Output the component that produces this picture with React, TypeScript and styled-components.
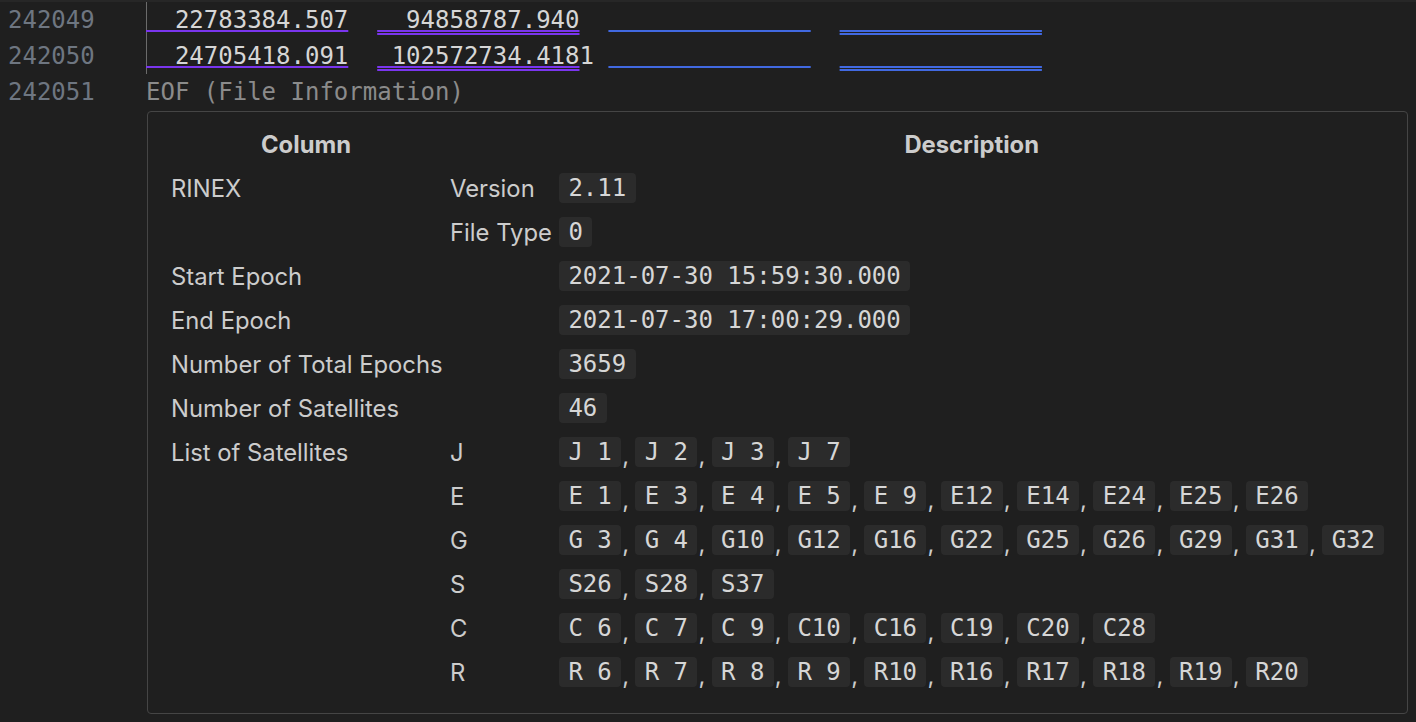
import React from "react";
import styled, { createGlobalStyle } from "styled-components";

const GlobalStyle = createGlobalStyle`
    html, body {
        margin: 0;
        padding: 0;
        background: #1f1f1f;
        overflow: hidden;
    }
`;

const MONO = `"DejaVu Sans Mono", "Liberation Mono", monospace`;
const SANS = `Inter, "Noto Sans", "Liberation Sans", sans-serif`;

const Editor = styled.main`
    width: 1416px;
    height: 722px;
    background: #1f1f1f;
    display: flex;
    flex-direction: column;
    font-family: ${MONO};
    font-size: 24px;
`;

const ScrollShadow = styled.div`
    height: 2px;
    background: #272727;
`;

const Line = styled.div`
    display: flex;
    height: 36px;
    line-height: 36px;
`;

const LineNo = styled.span`
    width: 146px;
    box-sizing: border-box;
    padding-left: 8px;
    color: #6e7681;
    flex-shrink: 0;
`;

const Code = styled.span<{ $guide?: boolean; $dim?: boolean }>`
    white-space: pre;
    color: ${(p) => (p.$dim ? "#8b8b8b" : "#d6d6d6")};
    box-shadow: ${(p) => (p.$guide ? "inset 1px 0 0 #6b6b6b" : "none")};
    flex: 1;
`;

const Field = styled.span<{ $blue?: boolean; $double?: boolean }>`
    text-decoration-line: underline;
    text-decoration-color: ${(p) => (p.$blue ? "#4169e1" : "#7a35ee")};
    text-decoration-style: ${(p) => (p.$double ? "double" : "solid")};
    text-decoration-thickness: 2px;
    text-underline-offset: 2px;
    text-decoration-skip-ink: none;
`;

const HoverRow = styled.div`
    display: flex;
    padding-left: 147px;
    margin-top: 1px;
`;

const HoverBox = styled.section`
    width: 1261px;
    height: 603px;
    box-sizing: border-box;
    border: 1px solid #454545;
    border-radius: 4px;
    background: #1f1f1f;
    padding: 10px 23px 18px;
    display: grid;
    grid-template-columns: 270px 100px 1fr;
    grid-auto-rows: 44px;
    column-gap: 9px;
    font-family: ${SANS};
    font-size: 23.8px;
    color: #cccccc;
`;

const HeadCell = styled.div`
    display: flex;
    align-items: center;
    justify-content: center;
    font-weight: 700;
`;

const Cell = styled.div`
    display: flex;
    align-items: center;
    white-space: nowrap;
`;

const Chip = styled.code`
    display: inline-block;
    height: 30px;
    line-height: 30px;
    padding: 0 9.4px;
    border-radius: 4px;
    background: #2b2b2b;
    color: #d6d6d6;
    font-family: ${MONO};
    font-size: 24px;
    white-space: pre;
`;

const Comma = styled.span`
    display: inline-block;
    width: 14.2px;
    box-sizing: border-box;
    padding-left: 1px;
    align-self: flex-end;
    line-height: 36px;
`;

const BLANK = " ".repeat(14);

type Row = { label?: string; sub?: string; values: string[] };

const rows: Row[] = [
    { label: "RINEX", sub: "Version", values: ["2.11"] },
    { sub: "File Type", values: ["0"] },
    { label: "Start Epoch", values: ["2021-07-30 15:59:30.000"] },
    { label: "End Epoch", values: ["2021-07-30 17:00:29.000"] },
    { label: "Number of Total Epochs", values: ["3659"] },
    { label: "Number of Satellites", values: ["46"] },
    { label: "List of Satellites", sub: "J", values: ["J 1", "J 2", "J 3", "J 7"] },
    {
        sub: "E",
        values: ["E 1", "E 3", "E 4", "E 5", "E 9", "E12", "E14", "E24", "E25", "E26"],
    },
    {
        sub: "G",
        values: ["G 3", "G 4", "G10", "G12", "G16", "G22", "G25", "G26", "G29", "G31", "G32"],
    },
    { sub: "S", values: ["S26", "S28", "S37"] },
    { sub: "C", values: ["C 6", "C 7", "C 9", "C10", "C16", "C19", "C20", "C28"] },
    {
        sub: "R",
        values: ["R 6", "R 7", "R 8", "R 9", "R10", "R16", "R17", "R18", "R19", "R20"],
    },
];

const App = () => {
    return (
        <Editor>
            <GlobalStyle />
            <ScrollShadow />
            <Line>
                <LineNo>242049</LineNo>
                <Code $guide>
                    <Field>{"  22783384.507"}</Field>
                    {"  "}
                    <Field $double>{"  94858787.940"}</Field>
                    {"  "}
                    <Field $blue>{BLANK}</Field>
                    {"  "}
                    <Field $blue $double>{BLANK}</Field>
                </Code>
            </Line>
            <Line>
                <LineNo>242050</LineNo>
                <Code $guide>
                    <Field>{"  24705418.091"}</Field>
                    {"  "}
                    <Field $double>{" 102572734.418"}</Field>
                    {"1 "}
                    <Field $blue>{BLANK}</Field>
                    {"  "}
                    <Field $blue $double>{BLANK}</Field>
                </Code>
            </Line>
            <Line>
                <LineNo>242051</LineNo>
                <Code $dim>EOF (File Information)</Code>
            </Line>
            <HoverRow>
                <HoverBox>
                    <HeadCell>Column</HeadCell>
                    <HeadCell />
                    <HeadCell>Description</HeadCell>
                    {rows.map((row, idx) => (
                        <React.Fragment key={idx}>
                            <Cell>{row.label}</Cell>
                            <Cell>{row.sub}</Cell>
                            <Cell>
                                {row.values.map((v, i) => (
                                    <React.Fragment key={i}>
                                        {i > 0 && <Comma>,</Comma>}
                                        <Chip>{v}</Chip>
                                    </React.Fragment>
                                ))}
                            </Cell>
                        </React.Fragment>
                    ))}
                </HoverBox>
            </HoverRow>
        </Editor>
    );
};

export default App;
